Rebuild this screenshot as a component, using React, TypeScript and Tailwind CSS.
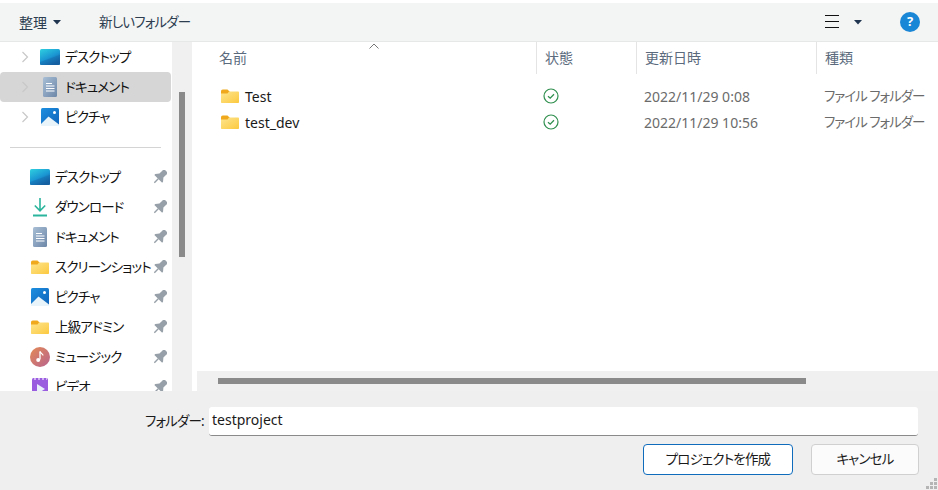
import React from "react";

const font = { fontFamily: '"Noto Sans", "Noto Sans CJK JP", sans-serif' };

function Folder() {
  return (
    <svg width="20" height="16" viewBox="0 0 20 16">
      <defs>
        <linearGradient id="fg" x1="0" y1="0" x2="1" y2="1">
          <stop offset="0" stopColor="#fde58e" />
          <stop offset="1" stopColor="#fcc93f" />
        </linearGradient>
      </defs>
      <path d="M1 3.5C1 2.2 1.6 1.5 2.8 1.5H7.5L9.5 3.5V6H1Z" fill="#f0a91c" />
      <path d="M9 3.5H18C18.6 3.5 19 4 19 4.5V14C19 14.6 18.6 15 18 15H2C1.4 15 1 14.6 1 14V5.5H7.5Z" fill="url(#fg)" />
    </svg>
  );
}
function Desktop() {
  return (
    <svg width="20" height="16" viewBox="0 0 20 16">
      <defs>
        <linearGradient id="dg" x1="0" y1="0" x2="0.6" y2="1">
          <stop offset="0" stopColor="#2fd0e0" />
          <stop offset="0.6" stopColor="#1a95d2" />
          <stop offset="1" stopColor="#14508f" />
        </linearGradient>
      </defs>
      <rect x="0" y="0" width="20" height="16" rx="1.5" fill="url(#dg)" />
      <path d="M0 13L20 6V16H0Z" fill="#1570b4" opacity="0.5" />
    </svg>
  );
}
function Doc() {
  return (
    <svg width="14" height="20" viewBox="0 0 14 20">
      <defs>
        <linearGradient id="docg" x1="0" y1="0" x2="1" y2="1">
          <stop offset="0" stopColor="#a9bfd6" />
          <stop offset="1" stopColor="#6d87a8" />
        </linearGradient>
      </defs>
      <rect width="14" height="20" rx="1.5" fill="url(#docg)" />
      <path d="M3 6.5H9M3 9H11.5M3 11.5H11.5M3 14H11.5" stroke="#fff" strokeWidth="1" />
    </svg>
  );
}
function Pic() {
  return (
    <svg width="18" height="18" viewBox="0 0 18 18">
      <defs>
        <linearGradient id="pg" x1="0" y1="0" x2="1" y2="1">
          <stop offset="0" stopColor="#1d8fe0" />
          <stop offset="1" stopColor="#0f62b8" />
        </linearGradient>
      </defs>
      <rect width="18" height="18" rx="1.5" fill="url(#pg)" />
      <circle cx="13.5" cy="4.5" r="1.5" fill="#fff" />
      <path d="M0 16L7.5 8.5L18 16.5V18H0Z" fill="#e8f3fa" />
    </svg>
  );
}
function Download() {
  return (
    <svg width="16" height="20" viewBox="0 0 16 20" fill="none" stroke="#2bb59c">
      <path d="M8 1V13.5M2.8 8.5L8 13.8L13.2 8.5" strokeWidth="1.6" />
      <path d="M1 18.5H15" strokeWidth="2" />
    </svg>
  );
}
function Music() {
  return (
    <svg width="20" height="20" viewBox="0 0 20 20">
      <defs>
        <linearGradient id="mg" x1="0" y1="0" x2="1" y2="1">
          <stop offset="0" stopColor="#e48a55" />
          <stop offset="1" stopColor="#b8648f" />
        </linearGradient>
      </defs>
      <circle cx="10" cy="10" r="10" fill="url(#mg)" />
      <path d="M10 4.5V12.5" stroke="#fff" strokeWidth="1.3" />
      <path d="M10 4.5C10.5 6.5 13 6.5 13 8.5" stroke="#fff" strokeWidth="1.2" fill="none" />
      <circle cx="8.2" cy="13" r="2" fill="#fff" />
    </svg>
  );
}
function Video() {
  return (
    <svg width="16" height="18" viewBox="0 0 16 18">
      <rect width="16" height="18" rx="1.5" fill="#9a5de0" />
      <path d="M2 1H4M6 1H8M10 1H12M14 1H15" stroke="#e2cdfa" strokeWidth="1.5" />
      <path d="M5 6L13 11L5 16Z" fill="#e8f0fb" />
    </svg>
  );
}
function Pin() {
  return (
    <svg width="14" height="14" viewBox="0 0 14 14" fill="#97a0a8">
      <g transform="rotate(45 7 7)">
        <path d="M3 -1.5H11V0.2H9.8V5L12.5 8.2V9.5H1.5V8.2L4.2 5V0.2H3Z" />
        <rect x="6.3" y="9.5" width="1.4" height="5.5" />
      </g>
    </svg>
  );
}
function Chevron() {
  return (
    <svg width="8" height="12" viewBox="0 0 8 12" fill="none" stroke="#c8c8c8" strokeWidth="1.2">
      <path d="M1.5 1L6.5 6L1.5 11" />
    </svg>
  );
}
function Check() {
  return (
    <svg width="16" height="16" viewBox="0 0 16 16" fill="none" stroke="#2f8f4e">
      <circle cx="8" cy="8" r="7" strokeWidth="1.2" />
      <path d="M5 8.2L7.2 10.2L11 6.2" strokeWidth="1.3" />
    </svg>
  );
}
function Caret({ color = "#1f3550" }: { color?: string }) {
  return (
    <svg width="8" height="5" viewBox="0 0 8 5" fill={color}>
      <path d="M0 0H8L4 4.5Z" />
    </svg>
  );
}

function TreeRow({ icon, label, selected }: { icon: React.ReactNode; label: string; selected?: boolean }) {
  return (
    <div className={`flex h-[30px] w-[171px] shrink-0 items-center rounded-sm pl-[21px] ${selected ? "bg-[#d6d6d6]" : ""}`}>
      <Chevron />
      <div className="ml-[11px] flex w-[20px] justify-center">{icon}</div>
      <span className="ml-[5px] text-[13.5px] tracking-[-0.8px] text-[#111]">{label}</span>
    </div>
  );
}

function QuickRow({ icon, label }: { icon: React.ReactNode; label: string }) {
  return (
    <div className="flex h-[30px] w-[172px] shrink-0 items-center pl-[30px]">
      <div className="flex w-[20px] justify-center">{icon}</div>
      <span className="ml-[5px] w-[93px] whitespace-nowrap text-[13.5px] tracking-[-0.85px] text-[#111]">{label}</span>
      <div className="ml-[5px]">
        <Pin />
      </div>
    </div>
  );
}

function HeaderCell({ label, className }: { label: string; className: string }) {
  return (
    <div className={`flex h-[32px] shrink-0 items-center border-r border-[#e4e4e4] pb-[2px] text-[14px] text-[#5b6b7d] ${className}`}>
      {label}
    </div>
  );
}

function FileRow({ name, date }: { name: string; date: string }) {
  return (
    <div className="flex h-[26px] items-center text-[14px]">
      <div className="flex w-[340px] shrink-0 items-center pl-[23px]">
        <Folder />
        <span className="ml-[5px] text-[#1a1a1a]">{name}</span>
      </div>
      <div className="flex w-[100px] shrink-0 pb-px pl-[6px]">
        <Check />
      </div>
      <div className="w-[180px] shrink-0 pl-[7px] text-[#6b6b6b]">{date}</div>
      <div className="whitespace-nowrap pl-[7px] text-[13.5px] tracking-[-1px] text-[#6b6b6b]">ファイル フォルダー</div>
    </div>
  );
}

export default function App() {
  return (
    <div style={font} className="relative flex h-[490px] w-[938px] flex-col overflow-hidden bg-white pt-[3px] [font-feature-settings:'palt']">
      <div className="flex h-[39px] shrink-0 items-center border-b border-[#e6e7e7] bg-[#f3f4f4] text-[14px] text-[#2c3e50]">
        <span className="ml-[19px]">整理</span>
        <span className="ml-[6px]">
          <Caret />
        </span>
        <span className="ml-[38px] text-[13.5px] tracking-[-0.8px]">新しいフォルダー</span>
        <div className="ml-auto flex items-center">
          <svg width="14" height="14" viewBox="0 0 14 14" stroke="#111" strokeWidth="1">
            <path d="M0 0.5H14M0 6.5H14M0 12.5H14" />
          </svg>
          <span className="ml-[15px]">
            <Caret />
          </span>
          <div className="ml-[38px] mr-[18px] flex h-[20px] w-[20px] items-center justify-center rounded-full bg-[#1a86d6] text-[13px] font-bold text-white">
            ?
          </div>
        </div>
      </div>

      <div className="flex h-[349px] shrink-0">
        <div className="flex w-[172px] shrink-0 flex-col overflow-hidden">
          <TreeRow icon={<Desktop />} label="デスクトップ" />
          <TreeRow icon={<Doc />} label="ドキュメント" selected />
          <TreeRow icon={<Pic />} label="ピクチャ" />
          <div className="mx-[10px] mb-[14px] mt-[15px] h-px w-[151px] shrink-0 bg-[#d4d4d4]" />
          <QuickRow icon={<Desktop />} label="デスクトップ" />
          <QuickRow icon={<Download />} label="ダウンロード" />
          <QuickRow icon={<Doc />} label="ドキュメント" />
          <QuickRow icon={<Folder />} label="スクリーンショット" />
          <QuickRow icon={<Pic />} label="ピクチャ" />
          <QuickRow icon={<Folder />} label="上級アドミン" />
          <QuickRow icon={<Music />} label="ミュージック" />
          <QuickRow icon={<Video />} label="ビデオ" />
        </div>

        <div className="w-[20px] shrink-0 bg-[#f0f0f0] pl-[7px] pt-[50px]">
          <div className="h-[165px] w-[6px] bg-[#8a8a8a]" />
        </div>

        <div className="ml-[5px] flex min-w-0 flex-1 flex-col">
          <div className="relative flex h-[32px] shrink-0">
            <svg className="absolute left-[172px] top-[1px]" width="10" height="6" viewBox="0 0 10 6" fill="none" stroke="#777">
              <path d="M0.5 5.5L5 1L9.5 5.5" />
            </svg>
            <HeaderCell label="名前" className="w-[340px] pl-[22px]" />
            <HeaderCell label="状態" className="w-[100px] pl-[8px]" />
            <HeaderCell label="更新日時" className="w-[180px] pl-[8px]" />
            <div className="flex h-[32px] items-center pb-[2px] pl-[8px] text-[14px] text-[#5b6b7d]">種類</div>
          </div>
          <div className="flex flex-1 flex-col pt-[9px]">
            <FileRow name="Test" date="2022/11/29 0:08" />
            <FileRow name="test_dev" date="2022/11/29 10:56" />
          </div>
          <div className="h-[20px] shrink-0 bg-[#f0f0f0] pl-[21px] pt-[7px]">
            <div className="h-[6px] w-[588px] bg-[#8a8a8a]" />
          </div>
        </div>
      </div>

      <div className="flex flex-1 flex-col bg-[#efefef]">
        <div className="mt-[16px] flex items-center">
          <span className="ml-[145px] w-[64px] whitespace-nowrap text-[13.5px] tracking-[-0.8px] text-[#1a1a1a]">フォルダー:</span>
          <div className="flex h-[29px] w-[709px] items-center rounded-[3px] border-b border-[#8a8a8a] bg-white pb-[4px] pl-[3px] text-[14px] text-[#1a1a1a]">
            testproject
          </div>
        </div>
        <div className="mt-[8px] flex justify-end gap-[18px] pr-[19px]">
          <div className="flex h-[31px] w-[150px] items-center justify-center rounded-[4px] border border-[#0f6cbd] bg-white text-[13.5px] tracking-[-0.8px] text-[#1a1a1a]">
            プロジェクトを作成
          </div>
          <div className="flex h-[31px] w-[108px] items-center justify-center rounded-[4px] border border-[#d0d0d0] bg-[#fbfbfb] text-[13.5px] tracking-[-0.8px] text-[#1a1a1a]">
            キャンセル
          </div>
        </div>
      </div>

      <svg className="absolute bottom-0 right-0" width="12" height="12" viewBox="0 0 12 12" fill="#b5b5b5">
        <rect x="8" y="0" width="3" height="3" />
        <rect x="4" y="4" width="3" height="3" />
        <rect x="8" y="4" width="3" height="3" />
        <rect x="0" y="8" width="3" height="3" />
        <rect x="4" y="8" width="3" height="3" />
        <rect x="8" y="8" width="3" height="3" />
      </svg>
    </div>
  );
}
